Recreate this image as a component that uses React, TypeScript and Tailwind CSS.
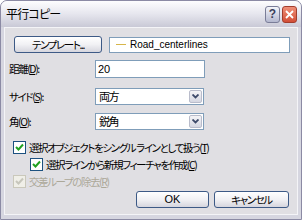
import React from 'react';

const jp = "font-['MS_UI_Gothic','Noto_Sans_CJK_JP',sans-serif] [font-feature-settings:'palt']";
const jpText = `${jp} text-[10.5px] tracking-[-1.4px]`;

function XpButton({ children, className = '' }: { children: React.ReactNode; className?: string }) {
  return (
    <div
      className={`flex items-center justify-center rounded-[3px] border border-[#3d5a86] bg-gradient-to-b from-white via-[#f1f1f4] to-[#d6d6de] text-black ${className}`}
    >
      {children}
    </div>
  );
}

function Combo({ value }: { value: string }) {
  return (
    <div className="flex h-[17px] w-[109px] items-center border border-[#7f9db9] bg-white">
      <span className={`flex-1 pl-[3px] text-[11px] leading-none ${jp}`}>{value}</span>
      <div className="mr-px flex h-[13px] w-[13px] items-center justify-center rounded-[2px] border border-[#b9bccb] bg-gradient-to-b from-[#f4f4f7] to-[#d5d7e2]">
        <svg width="7" height="5" viewBox="0 0 7 5">
          <path d="M0.5 0.5 L3.5 3.5 L6.5 0.5" fill="none" stroke="#3d4a6a" strokeWidth="1.8" />
        </svg>
      </div>
    </div>
  );
}

function Check({ disabled = false }: { disabled?: boolean }) {
  return (
    <div
      className={`flex h-[13px] w-[13px] shrink-0 items-center justify-center border ${
        disabled ? 'border-[#cac8bb] bg-[#f0efe8]' : 'border-[#1c5180] bg-white'
      }`}
    >
      <svg width="9" height="9" viewBox="0 0 9 9">
        <path
          d="M1 4 L3.5 6.5 L8 1.5"
          fill="none"
          stroke={disabled ? '#c7c6bc' : '#21a121'}
          strokeWidth="2"
        />
      </svg>
    </div>
  );
}

export default function App() {
  return (
    <div className="h-[220px] w-[302px] overflow-hidden rounded-t-[7px] border border-[#8b8aa4] bg-[#d6d6e0] flex flex-col">
      {/* title bar */}
      <div className="flex h-[26px] shrink-0 items-center bg-gradient-to-b from-[#fdfdfe] via-[#e6e6ee] to-[#c9c9d6] pl-[5px] pr-[4px]">
        <span className={`text-[12px] tracking-[-0.8px] text-black ${jp}`}>平行コピー</span>
        <div className="ml-auto flex gap-[2px]">
          <div className="flex h-[17px] w-[15px] items-center justify-center rounded-[3px] border border-[#7a7d98] bg-gradient-to-b from-[#f4f5fa] to-[#b4b8cf] text-[12px] font-bold leading-none text-[#3b3f5c] font-['Liberation_Sans',sans-serif]">
            ?
          </div>
          <div className="flex h-[17px] w-[15px] items-center justify-center rounded-[3px] border border-[#a23d2d] bg-gradient-to-b from-[#ee8f78] to-[#d24d36]">
            <svg width="9" height="9" viewBox="0 0 9 9">
              <path d="M1 1 L8 8 M8 1 L1 8" stroke="white" strokeWidth="1.8" />
            </svg>
          </div>
        </div>
      </div>

      {/* body */}
      <div className="mx-[3px] mb-[4px] flex flex-1 flex-col border border-[#f4f4f7] bg-[#e0dfe3] pl-[4px] pr-[7px] text-black">
        <div className="mt-[8px] flex items-center gap-[7px] pl-[5px]">
          <XpButton className={`h-[17px] w-[88px] ${jpText}`}>テンプレート...</XpButton>
          <div className="flex h-[16px] flex-1 items-center border border-[#7f9db9] bg-white pl-[6px]">
            <span className="mr-[4px] h-px w-[10px] bg-[#d7b64a]" />
            <span className="text-[10px] leading-none font-['Liberation_Sans',sans-serif]">Road_centerlines</span>
          </div>
        </div>

        <div className={`mt-[7px] flex items-center ${jpText}`}>
          <span className="w-[86px]">
            距離(<u>D</u>):
          </span>
          <div className="flex h-[18px] w-[110px] items-center border border-[#7f9db9] bg-white pl-[2px] text-[11px] tracking-normal font-['Liberation_Sans',sans-serif]">
            20
          </div>
        </div>

        <div className={`mt-[10px] flex items-center ${jpText}`}>
          <span className="w-[86px]">
            サイド(<u>S</u>):
          </span>
          <Combo value="両方" />
        </div>

        <div className={`mt-[8px] flex items-center ${jpText}`}>
          <span className="w-[86px]">
            角(<u>O</u>):
          </span>
          <Combo value="鋭角" />
        </div>

        <div className={`mt-[11px] flex flex-col gap-[4px] leading-[13px] ${jpText}`}>
          <div className="flex items-center gap-[3px] pl-[4px]">
            <Check />
            <span>
              選択オブジェクトをシングル ラインとして扱う(<u>T</u>)
            </span>
          </div>
          <div className="flex items-center gap-[3px] pl-[21px]">
            <Check />
            <span>
              選択ラインから新規フィーチャを作成(<u>C</u>)
            </span>
          </div>
          <div className="flex items-center gap-[3px] pl-[4px] text-[#aca899]">
            <Check disabled />
            <span>
              交差ループの除去(<u>R</u>)
            </span>
          </div>
        </div>

        <div className="mt-[3px] flex justify-end gap-[5px] pr-[1px]">
          <XpButton className="h-[17px] w-[73px] text-[11px] font-['Liberation_Sans',sans-serif]">OK</XpButton>
          <XpButton className={`h-[17px] w-[75px] ${jpText}`}>キャンセル</XpButton>
        </div>
      </div>
    </div>
  );
}
